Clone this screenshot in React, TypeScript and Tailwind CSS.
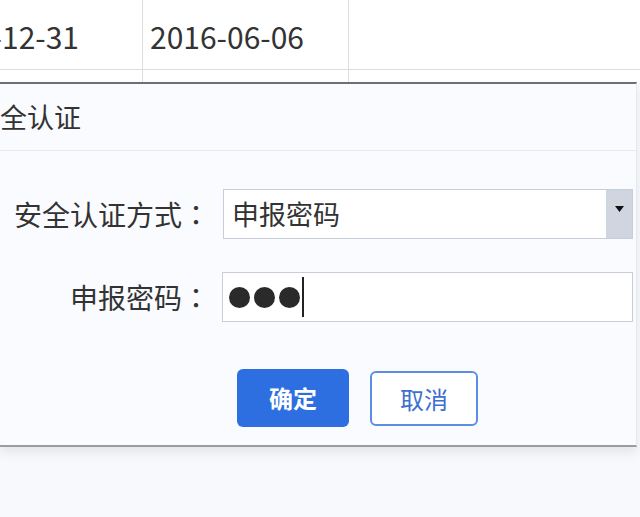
const font = "font-['Microsoft_YaHei','Noto_Sans_CJK_SC','Noto_Sans',sans-serif]";
const colon = "font-['Noto_Sans_CJK_JP',sans-serif]";

function TableRows() {
  return (
    <div className="h-[82px] bg-white">
      <div className="flex h-[70px] border-b border-[#dcdee2]">
        <div className="-ml-[82px] w-[225px] shrink-0 border-r border-[#dcdee2] pl-[7px] pt-[15px] text-[30px] leading-[42px] text-[#333]">
          2015-12-31
        </div>
        <div className="w-[206px] shrink-0 border-r border-[#dcdee2] pl-[7px] pt-[15px] text-[30px] leading-[42px] text-[#333]">
          2016-06-06
        </div>
        <div className="flex-1" />
      </div>
      <div className="flex h-[12px]">
        <div className="-ml-[82px] w-[225px] shrink-0 border-r border-[#dcdee2]" />
        <div className="w-[206px] shrink-0 border-r border-[#dcdee2]" />
        <div className="flex-1" />
      </div>
    </div>
  );
}

function Dialog() {
  return (
    <div className="w-[637px] border-t-[2px] border-b-[2px] border-r border-t-[#6f6f73] border-b-[#9a9ca2] border-r-[#e6e8ee] bg-[#fafbfe] shadow-[0_6px_10px_rgba(0,0,0,0.08)]">
      <div className="flex h-[67px] items-center border-b border-[#e6e9ef]">
        <span className="-ml-[27px] text-[27px] leading-[36px] text-[#333]">安全认证</span>
      </div>

      <div className="pt-[38px]">
        <div className="flex items-center">
          <div className="w-[210px] text-right text-[28px] leading-[36px] text-[#333]">
            安全认证方式<span className={colon}>：</span>
          </div>
          <div className="ml-[13px] flex h-[50px] w-[410px] border border-[#c6ced9] bg-white">
            <div className="flex flex-1 items-center pl-[8px] text-[27px] leading-[36px] text-[#333]">
              申报密码
            </div>
            <div className="flex w-[26px] items-start justify-center bg-[#d0d6df] pt-[16px]">
              <svg width="9" height="6" viewBox="0 0 9 6">
                <path d="M0 0 H9 L4.5 6 Z" fill="#111" />
              </svg>
            </div>
          </div>
        </div>

        <div className="mt-[33px] flex items-center">
          <div className="w-[210px] text-right text-[28px] leading-[36px] text-[#333]">
            申报密码<span className={colon}>：</span>
          </div>
          <div className="ml-[12px] flex h-[50px] w-[411px] items-center border border-[#c6ced9] bg-white pl-[6px]">
            <div className="flex gap-[4px]">
              <div className="h-[21px] w-[21px] rounded-full bg-[#2a2a2a]" />
              <div className="h-[21px] w-[21px] rounded-full bg-[#2a2a2a]" />
              <div className="h-[21px] w-[21px] rounded-full bg-[#2a2a2a]" />
            </div>
            <div className="ml-[2px] h-[40px] w-[2px] bg-[#222]" />
          </div>
        </div>

        <div className="flex gap-[21px] pb-[18px] pl-[237px] pt-[47px]">
          <button className="h-[58px] w-[112px] rounded-[6px] bg-[#2d6ee0] text-[24px] font-bold text-white">
            确定
          </button>
          <button className="mt-[2px] h-[55px] w-[108px] rounded-[6px] border-2 border-[#5b8ee0] bg-white text-[24px] text-[#3d6fd0]">
            取消
          </button>
        </div>
      </div>
    </div>
  );
}

export default function App() {
  return (
    <div className={`h-[517px] w-[640px] overflow-hidden bg-[#f8f9fc] ${font}`}>
      <TableRows />
      <Dialog />
    </div>
  );
}
